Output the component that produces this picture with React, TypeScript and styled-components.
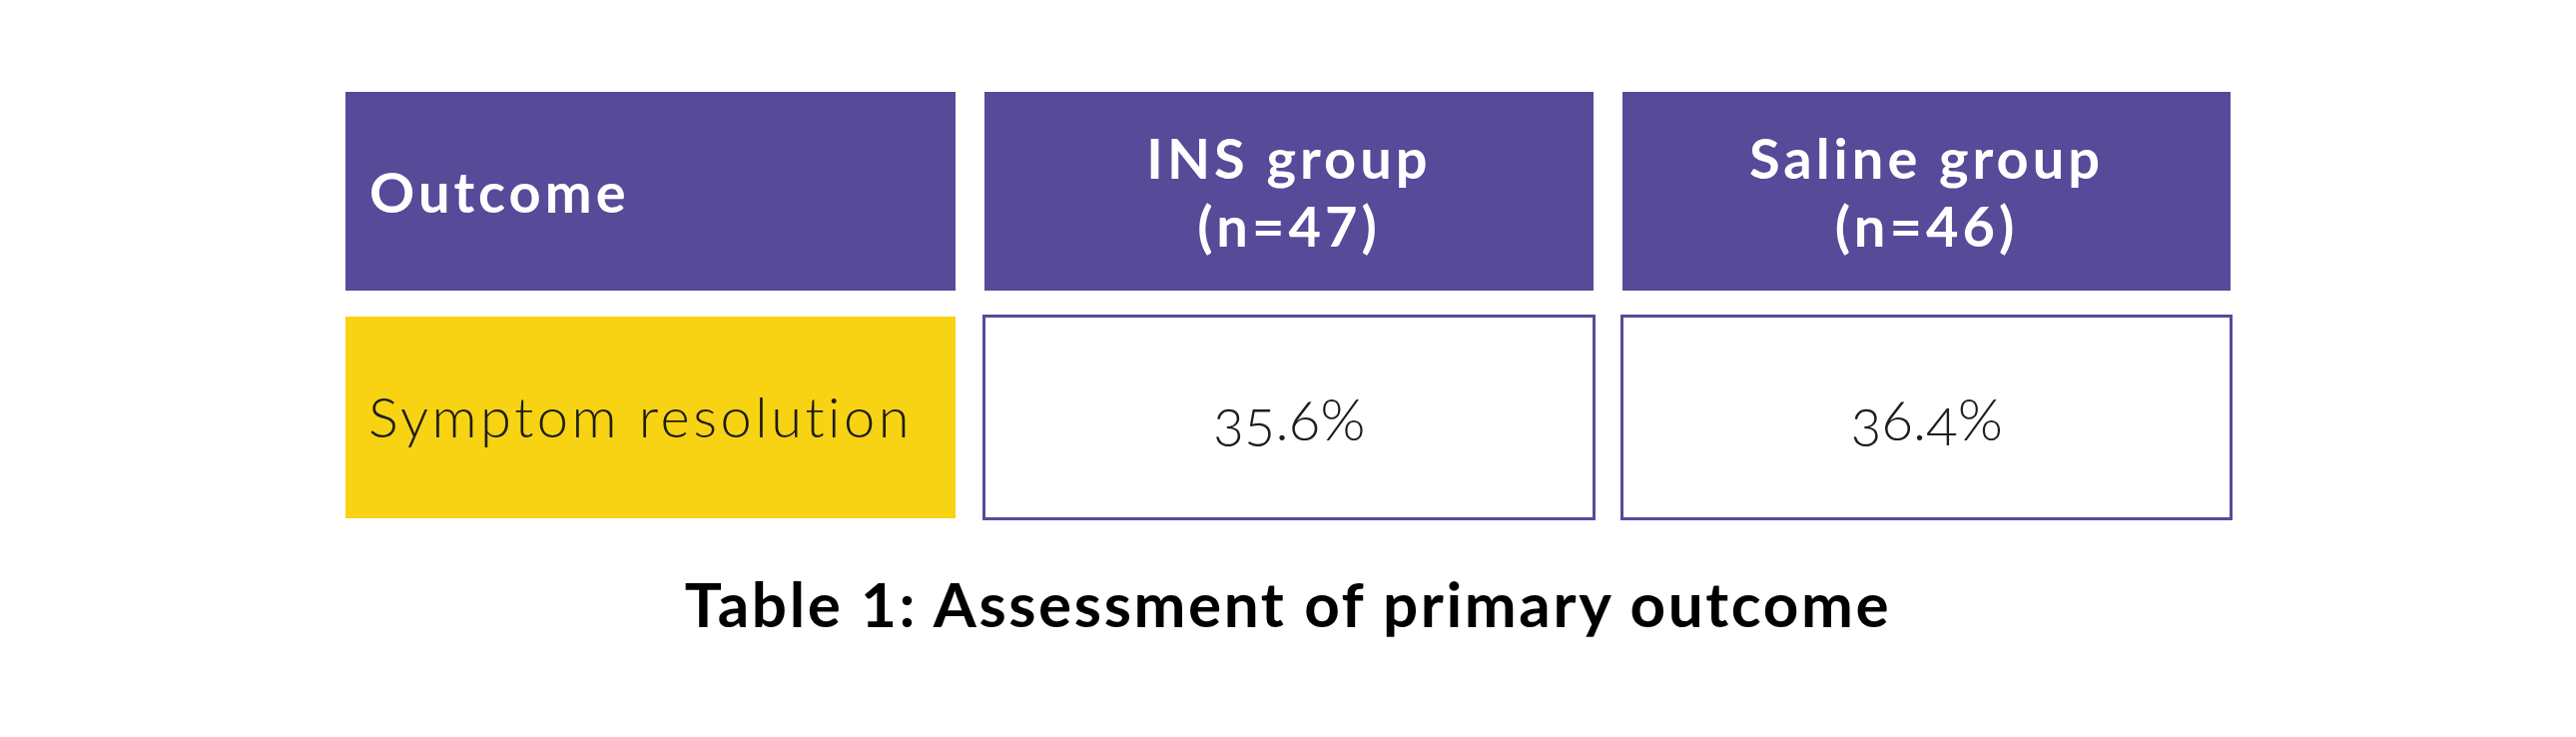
import React from 'react';
import styled, { createGlobalStyle } from 'styled-components';

const GlobalStyle = createGlobalStyle`
  html, body {
    margin: 0;
    padding: 0;
    background: #ffffff;
  }
  body {
    font-family: Lato, "Open Sans", "Liberation Sans", sans-serif;
    color: #1d1d1b;
  }
`;

const Page = styled.div`
  width: 2580px;
  height: 738px;
  display: flex;
  flex-direction: column;
  align-items: center;
  padding-top: 92px;
  box-sizing: border-box;
`;

const Grid = styled.div`
  display: grid;
  grid-template-columns: 611px 610px 609px;
  grid-template-rows: 199px 202px;
  column-gap: 29px;
  row-gap: 26px;
`;

const HeadCell = styled.div<{ $center?: boolean }>`
  background: #564a99;
  color: #ffffff;
  display: flex;
  flex-direction: column;
  align-items: ${(p) => (p.$center ? 'center' : 'flex-start')};
  justify-content: center;
  text-align: ${(p) => (p.$center ? 'center' : 'left')};
  padding: 0 24px;
  font-weight: 700;
  font-size: 56px;
  line-height: 68px;
  letter-spacing: 4px;
`;

const LabelCell = styled.div`
  background: #f8d313;
  display: flex;
  align-items: center;
  padding: 0 24px 4px 23px;
  font-weight: 300;
  font-size: 56px;
  letter-spacing: 3.5px;
  color: #1d1d1b;
`;

const ValueCell = styled.div`
  border: 3px solid #564a99;
  margin: -2px;
  display: flex;
  align-items: center;
  justify-content: center;
  font-weight: 300;
  font-size: 58px;
  font-variant-numeric: oldstyle-nums;
  color: #1d1d1b;
`;

const Caption = styled.div`
  margin-top: 54px;
  font-weight: 700;
  font-size: 62px;
  line-height: 1;
  letter-spacing: 2.6px;
  color: #000000;
`;

const groups = [
  { name: 'INS group', n: 47, value: '35.6%' },
  { name: 'Saline group', n: 46, value: '36.4%' },
];

export default function App() {
  return (
    <>
      <GlobalStyle />
      <Page>
        <Grid>
          <HeadCell>Outcome</HeadCell>
          {groups.map((g) => (
            <HeadCell key={g.name} $center>
              <span>{g.name}</span>
              <span>(n={g.n})</span>
            </HeadCell>
          ))}
          <LabelCell>Symptom resolution</LabelCell>
          {groups.map((g) => (
            <ValueCell key={g.name}>{g.value}</ValueCell>
          ))}
        </Grid>
        <Caption>Table 1: Assessment of primary outcome</Caption>
      </Page>
    </>
  );
}
